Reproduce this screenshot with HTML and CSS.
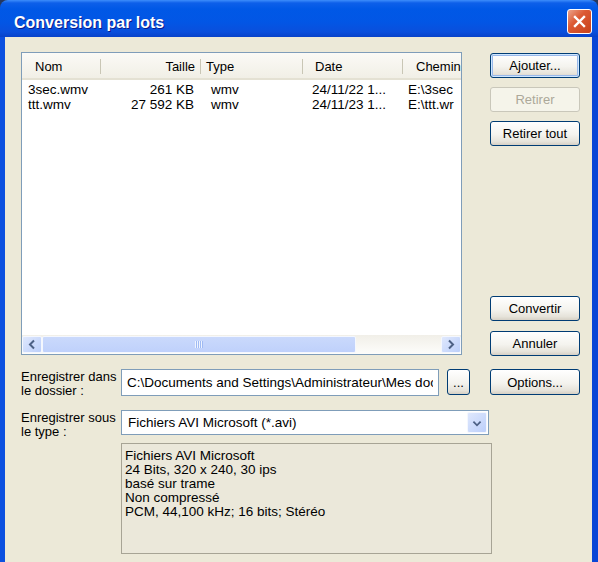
FILE: index.html
```html
<!DOCTYPE html>
<html lang="fr">

<head>
    <meta charset="UTF-8">
    <meta name="viewport" content="width=device-width, initial-scale=1.0">
    <title>Conversion par lots</title>

    <link rel="stylesheet" href="styles.css">

</head>

<body>
    <div class="window">
        <!-- Title bar -->
        <div class="titlebar">
            <span class="title">Conversion par lots</span>
            <button class="close-btn" aria-label="Fermer">
                <svg width="13" height="13" viewBox="0 0 13 13">
                    <path d="M2 2 L11 11 M11 2 L2 11" stroke="#fff" stroke-width="2.4" stroke-linecap="square" fill="none" />
                </svg>
            </button>
        </div>

        <div class="dialog">
            <div class="top-row">
                <!-- File list -->
                <div class="file-list">
                    <div class="list-head">
                        <div class="hcell nom">Nom</div>
                        <div class="hcell taille">Taille</div>
                        <div class="hcell type">Type</div>
                        <div class="hcell date">Date</div>
                        <div class="hcell chemin">Chemin</div>
                    </div>
                    <div class="list-rows">
                        <div class="list-row">
                            <div class="cell nom">3sec.wmv</div>
                            <div class="cell taille">261 KB</div>
                            <div class="cell type">wmv</div>
                            <div class="cell date">24/11/22 1...</div>
                            <div class="cell chemin">E:\3sec</div>
                        </div>
                        <div class="list-row">
                            <div class="cell nom">ttt.wmv</div>
                            <div class="cell taille">27 592 KB</div>
                            <div class="cell type">wmv</div>
                            <div class="cell date">24/11/23 1...</div>
                            <div class="cell chemin">E:\ttt.wr</div>
                        </div>
                    </div>
                    <div class="hscroll">
                        <div class="sb-btn">
                            <svg width="18" height="17" viewBox="0 0 18 17">
                                <path d="M11 4.5 L7 8.5 L11 12.5" stroke="#4d6185" stroke-width="2" fill="none" />
                            </svg>
                        </div>
                        <div class="sb-thumb"><span class="grip"></span></div>
                        <div class="sb-track"></div>
                        <div class="sb-btn">
                            <svg width="18" height="17" viewBox="0 0 18 17">
                                <path d="M7 4.5 L11 8.5 L7 12.5" stroke="#4d6185" stroke-width="2" fill="none" />
                            </svg>
                        </div>
                    </div>
                </div>

                <!-- Side buttons -->
                <div class="side-buttons">
                    <div class="btn-group">
                        <button class="btn default">Ajouter...</button>
                        <button class="btn" disabled>Retirer</button>
                        <button class="btn">Retirer tout</button>
                    </div>
                    <div class="btn-group">
                        <button class="btn">Convertir</button>
                        <button class="btn">Annuler</button>
                    </div>
                </div>
            </div>

            <!-- Output folder -->
            <div class="field-row folder-row">
                <label class="field-label" for="folder">Enregistrer dans<br>le dossier :</label>
                <input class="text-field" id="folder" type="text" value="C:\Documents and Settings\Administrateur\Mes documents">
                <button class="btn browse">...</button>
                <button class="btn options">Options...</button>
            </div>

            <!-- Output type -->
            <div class="field-row type-row">
                <div class="field-label">Enregistrer sous<br>le type :</div>
                <div class="combo">
                    <span class="combo-text">Fichiers AVI Microsoft (*.avi)</span>
                    <span class="combo-btn">
                        <svg width="20" height="21" viewBox="0 0 20 21">
                            <path d="M6 8.5 L10 12.5 L14 8.5" stroke="#4d6185" stroke-width="2" fill="none" />
                        </svg>
                    </span>
                </div>
            </div>

            <div class="format-info">
                Fichiers AVI Microsoft<br>
                24 Bits, 320 x 240, 30 ips<br>
                basé sur trame<br>
                Non compressé<br>
                PCM, 44,100 kHz; 16 bits; Stéréo
            </div>
        </div>
    </div>
</body>

</html>
```

FILE: styles.css
```css
* {
    box-sizing: border-box;
}

body {
    margin: 0;
    background: #24375f;
    font-family: "Liberation Sans", Arial, sans-serif;
    font-size: 13px;
    color: #000;
}

.window {
    width: 598px;
    height: 562px;
    display: flex;
    flex-direction: column;
}

/* Title bar */
.titlebar {
    height: 37px;
    flex-shrink: 0;
    display: flex;
    align-items: flex-start;
    justify-content: space-between;
    padding: 9px 6px 0 14px;
    border-radius: 8px 8px 0 0;
    background: linear-gradient(180deg, #3d8dfb 0px, #0d5fe9 3px, #0058e6 9px, #0256e5 22px, #0a4fdc 32px, #0842c9 37px);
}

.title {
    margin-top: 5px;
    font-size: 16px;
    font-weight: bold;
    color: #fff;
    text-shadow: 1px 1px 0 #0a1a8c;
}

.close-btn {
    width: 25px;
    height: 25px;
    padding: 0;
    border: 1px solid #fff;
    border-radius: 3px;
    background: linear-gradient(135deg, #eba48d 0%, #dc5a34 40%, #c8421c 100%);
    display: flex;
    align-items: center;
    justify-content: center;
}

/* Dialog body */
.dialog {
    flex: 1;
    background: #ece9d8;
    border-left: 5px solid #0b50e0;
    border-right: 6px solid #0845d6;
    padding: 15px 0 0 16px;
    display: flex;
    flex-direction: column;
}

.top-row {
    display: flex;
    height: 304px;
}

/* File list */
.file-list {
    width: 441px;
    height: 303px;
    border: 1px solid #7f9db9;
    background: #fff;
    display: flex;
    flex-direction: column;
    overflow: hidden;
}

.list-head,
.list-row {
    display: grid;
    grid-template-columns: 79px 100px 102px 100px 140px;
    white-space: nowrap;
}

.list-head {
    height: 27px;
    flex-shrink: 0;
    padding-top: 2px;
    background: linear-gradient(#fbfaf6, #f1efe6);
    border-bottom: 2px solid #e4e1d3;
}

.hcell {
    display: flex;
    align-items: center;
    background: linear-gradient(#c9c6b5, #c9c6b5) no-repeat right 4px / 1px calc(100% - 8px);
}

.hcell.nom {
    padding-left: 13px;
}

.hcell.taille {
    justify-content: flex-end;
    padding-right: 6px;
}

.hcell.type {
    padding-left: 5px;
}

.hcell.date {
    padding-left: 12px;
}

.hcell.chemin {
    padding-left: 13px;
}

.list-rows {
    flex: 1;
    padding-top: 2px;
}

.list-row {
    height: 15px;
    line-height: 15px;
    font-size: 13.5px;
}

.cell {
    overflow: hidden;
}

.cell.nom {
    padding-left: 6px;
}

.cell.taille {
    text-align: right;
    padding-right: 7px;
}

.cell.type {
    padding-left: 10px;
}

.cell.date {
    padding-left: 9px;
}

.cell.chemin {
    padding-left: 5px;
}

/* Horizontal scrollbar */
.hscroll {
    height: 19px;
    flex-shrink: 0;
    display: flex;
    padding: 1px 0;
    background: linear-gradient(#f1efe8, #fdfdfb);
}

.sb-btn {
    width: 20px;
    border: 1px solid #f4f7fe;
    border-radius: 2px;
    background: linear-gradient(135deg, #dfe8fd, #bccffa);
    display: flex;
    align-items: center;
    justify-content: center;
}

.sb-thumb {
    width: 314px;
    border: 1px solid #f4f7fe;
    border-radius: 2px;
    background: linear-gradient(#cad9fc, #bfd1fb);
    display: flex;
    align-items: center;
    justify-content: center;
}

.grip {
    width: 8px;
    height: 7px;
    background: repeating-linear-gradient(90deg, #eef3fe 0 1px, #9fbaf3 1px 2px);
}

.sb-track {
    flex: 1;
}

/* Buttons */
.side-buttons {
    margin-left: 28px;
    width: 90px;
    display: flex;
    flex-direction: column;
    justify-content: space-between;
}

.btn-group {
    display: flex;
    flex-direction: column;
    gap: 10px;
}

.btn-group:first-child {
    margin-top: 1px;
    gap: 9px;
}

.btn {
    font: inherit;
    width: 90px;
    height: 25px;
    padding: 0;
    color: #000;
    border: 1px solid #003c74;
    border-radius: 3px;
    background: linear-gradient(#ffffff, #f4f3ee 55%, #e6e3da 85%, #d6d0c5);
}

.btn.default {
    box-shadow: inset 0 0 0 1px #cee7ff, inset 0 0 0 2px #98b8ea;
}

.btn:disabled {
    color: #aca899;
    border-color: #c9c7ba;
    background: #f5f4ea;
}

/* Form rows */
.field-row {
    display: flex;
    align-items: flex-start;
}

.field-label {
    width: 100px;
    flex-shrink: 0;
    line-height: 14px;
    white-space: nowrap;
}

.folder-row {
    height: 27px;
    margin-top: 13px;
}

.folder-row .field-label {
    padding-top: 1px;
}

.text-field {
    font: inherit;
    font-size: 13.5px;
    width: 318px;
    height: 27px;
    padding: 0 5px;
    border: 1px solid #7f9db9;
    background: #fff;
    color: #000;
}

.btn.browse {
    width: 23px;
    height: 26px;
    margin-left: 8px;
}

.btn.options {
    height: 26px;
    margin-left: 20px;
}

.type-row {
    height: 25px;
    margin-top: 14px;
}

.type-row .field-label {
    padding-top: 1px;
}

.combo {
    width: 368px;
    height: 25px;
    border: 1px solid #7f9db9;
    background: #fff;
    display: flex;
    align-items: center;
    padding: 1px 1px 1px 6px;
    font-size: 13.5px;
}

.combo-text {
    flex: 1;
}

.combo-btn {
    width: 20px;
    height: 21px;
    border: 1px solid #f4f7fe;
    border-radius: 2px;
    background: linear-gradient(135deg, #dfe8fd, #bccffa);
    display: flex;
}

.format-info {
    width: 371px;
    height: 111px;
    margin: 8px 0 0 100px;
    padding: 5px 3px;
    font-size: 13.5px;
    line-height: 14px;
    border: 1px solid #a7a495;
    background: #ebe8da;
}
```
